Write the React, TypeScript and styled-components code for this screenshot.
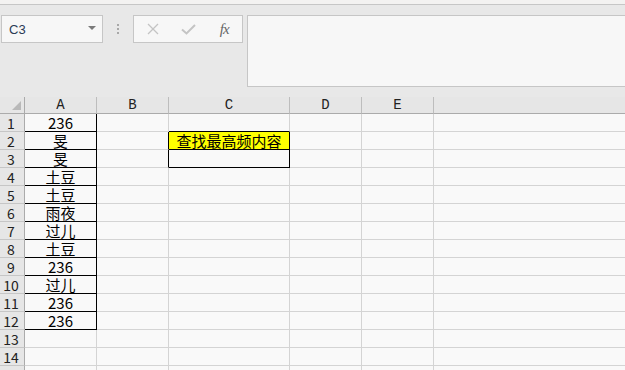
import { Fragment } from "react";
import styled, { createGlobalStyle } from "styled-components";

// Sheet data
const columns = [
  { key: "A", width: 72 },
  { key: "B", width: 72 },
  { key: "C", width: 121 },
  { key: "D", width: 72 },
  { key: "E", width: 72 },
];

const columnA = ["236", "旻", "旻", "土豆", "土豆", "雨夜", "过儿", "土豆", "236", "过儿", "236", "236"];

type Side = "right" | "bottom";

const GlobalStyle = createGlobalStyle`
  html, body {
    margin: 0;
    padding: 0;
    background: #e8e8e8;
  }
  #root {
    width: 625px;
    height: 370px;
    overflow: hidden;
  }
`;

const Window = styled.div`
  width: 625px;
  height: 370px;
  display: flex;
  flex-direction: column;
  background: #e8e8e8;
  overflow: hidden;

  & > * {
    flex-shrink: 0;
  }
`;

const TopStrip = styled.div`
  height: 4px;
  background: #f3f2f1;
  border-bottom: 1px solid #c6c6c6;
`;

const FormulaBar = styled.div`
  display: flex;
  align-items: flex-start;
  padding: 10px 0 0 1px;
  height: 71px;
`;

const NameBox = styled.div`
  box-sizing: border-box;
  width: 102px;
  height: 28px;
  border: 1px solid #c6c6c6;
  background: #f7f7f7;
  display: flex;
  align-items: center;
  justify-content: space-between;
  padding: 0 6px 0 7px;
  font-family: "Liberation Sans", Arial, sans-serif;
  font-size: 13px;
  color: #2b3a55;
`;

const Caret = styled.span`
  width: 0;
  height: 0;
  border-left: 4px solid transparent;
  border-right: 4px solid transparent;
  border-top: 4px solid #7a7a7a;
  margin-top: -3px;
`;

const Grip = styled.div`
  width: 30px;
  height: 28px;
  display: flex;
  flex-direction: column;
  align-items: center;
  justify-content: center;
  gap: 2px;

  span {
    width: 2px;
    height: 2px;
    background: #a8a8a8;
  }
`;

const ButtonGroup = styled.div`
  box-sizing: border-box;
  width: 110px;
  height: 28px;
  border: 1px solid #c6c6c6;
  background: #f7f7f7;
  display: flex;
  align-items: center;
  padding-left: 1px;
`;

const ToolButton = styled.div`
  width: 36px;
  height: 26px;
  display: flex;
  align-items: center;
  justify-content: center;
`;

const FxLabel = styled.span`
  font-family: "Liberation Serif", "Times New Roman", serif;
  font-style: italic;
  font-size: 15px;
  color: #666;
  letter-spacing: -1px;
`;

const FormulaInput = styled.div`
  flex: 1;
  height: 72px;
  margin-left: 4px;
  box-sizing: border-box;
  border: 1px solid #c6c6c6;
  border-right: none;
  background: #f7f7f7;
`;

const Sheet = styled.div`
  margin-top: 11px;
  display: grid;
  grid-template-columns: 25px ${columns.map((c) => `${c.width}px`).join(" ")} 1fr;
  grid-template-rows: 17px;
  grid-auto-rows: 18px;
  background: #f9f9f9;
`;

const Corner = styled.div`
  box-sizing: border-box;
  background: #e6e6e6;
  border-right: 1px solid #ababab;
  border-bottom: 1px solid #ababab;
  position: relative;

  &::after {
    content: "";
    position: absolute;
    right: 3px;
    bottom: 3px;
    width: 0;
    height: 0;
    border-left: 9px solid transparent;
    border-bottom: 9px solid #b9b9b9;
  }
`;

const ColHeader = styled.div<{ $last?: boolean }>`
  box-sizing: border-box;
  background: #e6e6e6;
  border-right: ${(p) => (p.$last ? "none" : "1px solid #bdbdbd")};
  border-bottom: 1px solid #ababab;
  display: flex;
  align-items: center;
  justify-content: center;
  font-family: "Liberation Mono", "Courier New", monospace;
  font-size: 14px;
  line-height: 1;
  color: #222;
`;

const RowHeader = styled.div`
  box-sizing: border-box;
  background: #e6e6e6;
  border-right: 1px solid #ababab;
  border-bottom: 1px solid #c6c6c6;
  display: flex;
  align-items: center;
  justify-content: center;
  font-family: "Noto Sans CJK SC", sans-serif;
  font-size: 14px;
  line-height: 1;
  color: #222;
  padding-right: 2px;
`;

const Cell = styled.div<{ $dark?: Side[]; $fill?: string }>`
  box-sizing: border-box;
  background: ${(p) => p.$fill || "#f9f9f9"};
  border-right: 1px solid
    ${(p) => (p.$dark?.includes("right") ? "#000" : "#d4d4d4")};
  border-bottom: 1px solid
    ${(p) => (p.$dark?.includes("bottom") ? "#000" : "#d4d4d4")};
  display: flex;
  align-items: center;
  justify-content: center;
  font-family: "Noto Sans CJK SC", sans-serif;
  font-size: 15px;
  line-height: 1;
  color: #000;
  white-space: nowrap;
`;

const WideCell = styled(Cell)`
  border-right: none;
`;

const CloseIcon = () => (
  <svg width="12" height="12" viewBox="0 0 12 12" fill="none" stroke="#c4c4c4" strokeWidth="1.3">
    <line x1="1" y1="1" x2="11" y2="11" />
    <line x1="11" y1="1" x2="1" y2="11" />
  </svg>
);

const CheckIcon = () => (
  <svg width="15" height="11" viewBox="0 0 15 11" fill="none" stroke="#c4c4c4" strokeWidth="2">
    <polyline points="1 5.5 5.5 9.5 14 1" />
  </svg>
);

function cellFor(row: number, col: string): { text?: string; dark?: Side[]; fill?: string } {
  if (col === "A" && row <= 12) return { text: columnA[row - 1], dark: ["right", "bottom"] };
  if (col === "B" && (row === 2 || row === 3)) return { dark: ["right"] };
  if (col === "C" && row === 1) return { dark: ["bottom"] };
  if (col === "C" && row === 2) return { text: "查找最高频内容", dark: ["right", "bottom"], fill: "#ffff00" };
  if (col === "C" && row === 3) return { dark: ["right", "bottom"] };
  return {};
}

export default function App() {
  // 14 numbered rows are visible; the 15th only peeks in below the fold
  const rows = Array.from({ length: 15 }, (_, i) => i + 1);

  return (
    <Window>
      <GlobalStyle />
      <TopStrip />
      <FormulaBar>
        <NameBox>
          C3
          <Caret />
        </NameBox>
        <Grip>
          <span />
          <span />
          <span />
        </Grip>
        <ButtonGroup>
          <ToolButton>
            <CloseIcon />
          </ToolButton>
          <ToolButton>
            <CheckIcon />
          </ToolButton>
          <ToolButton>
            <FxLabel>fx</FxLabel>
          </ToolButton>
        </ButtonGroup>
        <FormulaInput />
      </FormulaBar>

      <Sheet>
        <Corner />
        {columns.map((c) => (
          <ColHeader key={c.key}>{c.key}</ColHeader>
        ))}
        <ColHeader $last />

        {rows.map((r) => (
          <Fragment key={r}>
            <RowHeader>{r <= 14 ? r : ""}</RowHeader>
            {columns.map((c) => {
              const cell = cellFor(r, c.key);
              return (
                <Cell key={c.key} $dark={cell.dark} $fill={cell.fill}>
                  {cell.text}
                </Cell>
              );
            })}
            <WideCell />
          </Fragment>
        ))}
      </Sheet>
    </Window>
  );
}
